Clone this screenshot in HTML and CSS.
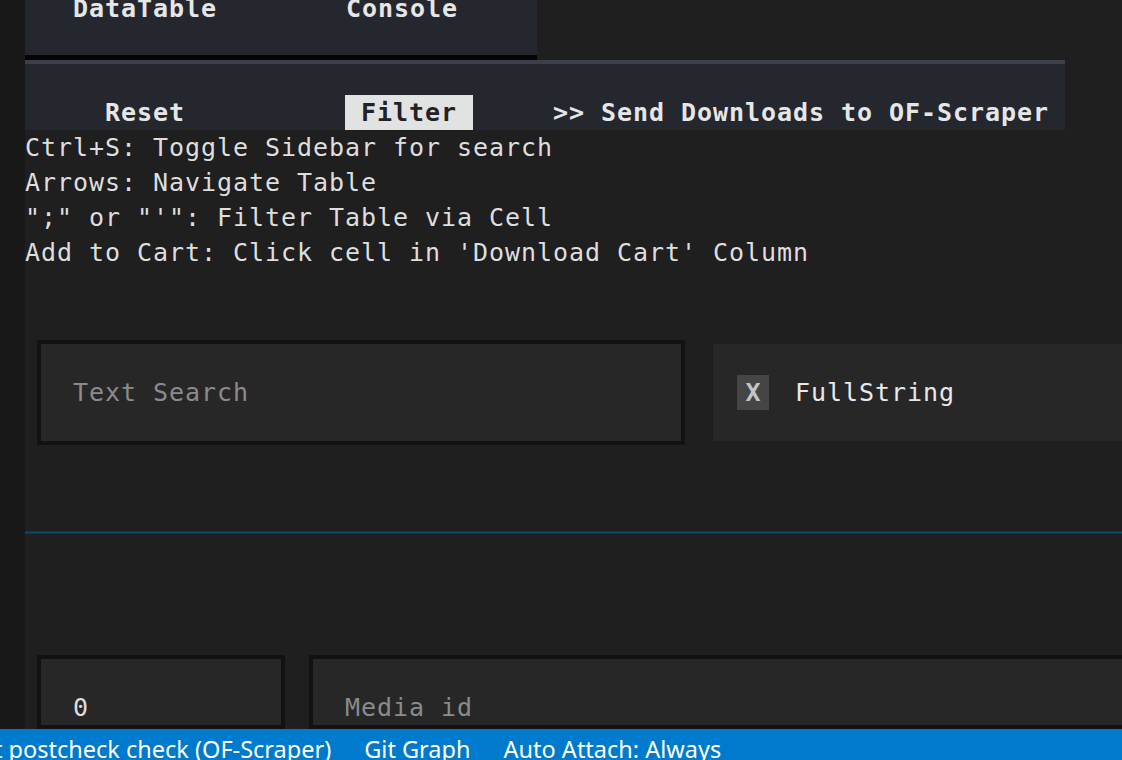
FILE: index.html
```html
<!DOCTYPE html>
<html>
<head>
<meta charset="utf-8">
<link rel="stylesheet" href="styles.css">
</head>
<body>
<div class="app">
  <div class="strip"></div>
  <div class="main">
    <div class="tabs">
      <span class="tab tab-first">DataTable</span>
      <span class="tab tab-second">Console</span>
    </div>
    <div class="underline"></div>
    <div class="toolbar">
      <span class="btn btn-reset">Reset</span>
      <span class="btn btn-filter">Filter</span>
      <span class="btn btn-send">&gt;&gt; Send Downloads to OF-Scraper</span>
    </div>
    <div class="help">
      <div class="help-line">Ctrl+S: Toggle Sidebar for search</div>
      <div class="help-line">Arrows: Navigate Table</div>
      <div class="help-line">";" or "'": Filter Table via Cell</div>
      <div class="help-line">Add to Cart: Click cell in 'Download Cart' Column</div>
    </div>
    <div class="search-row">
      <div class="input input-search"><span class="placeholder">Text Search</span></div>
      <div class="filter-panel">
        <span class="xbox">X</span>
        <span class="fullstring">FullString</span>
      </div>
    </div>
    <div class="rule"></div>
    <div class="bottom-row">
      <div class="input input-num"><span class="value">0</span></div>
      <div class="input input-media"><span class="placeholder">Media id</span></div>
    </div>
  </div>
</div>
<div class="statusbar">
  <span class="status-item status-first">t postcheck check (OF-Scraper)</span>
  <span class="status-item">Git Graph</span>
  <span class="status-item">Auto Attach: Always</span>
</div>
</body>
</html>
```
FILE: styles.css
```css
html, body {
  margin: 0;
  padding: 0;
}
body {
  width: 1122px;
  height: 760px;
  overflow: hidden;
  background: #1f1f1f;
  font-family: "DejaVu Sans Mono", monospace;
  font-size: 25px;
  letter-spacing: 0.95px;
  color: #e0e0e0;
}
.app {
  display: flex;
  height: 729px;
  overflow: hidden;
}
.strip {
  width: 25px;
  flex: none;
  background: #181818;
}
.main {
  flex: 1;
  display: flex;
  flex-direction: column;
  min-width: 0;
}
.main > * {
  flex: none;
}
.tabs {
  width: 512px;
  height: 55px;
  background: #24272e;
  display: flex;
  align-items: flex-start;
  overflow: hidden;
}
.tab {
  font-weight: bold;
  line-height: 17px;
  color: #e6e6e6;
  white-space: pre;
}
.tab-first { margin-left: 48px; }
.tab-second { margin-left: 129px; }
.underline {
  width: 512px;
  height: 5px;
  background: #050505;
}
.toolbar {
  width: 1040px;
  height: 66px;
  border-top: 4px solid #3c4149;
  background: #24272e;
  display: flex;
  align-items: flex-end;
}
.btn {
  font-weight: bold;
  line-height: 35px;
  padding: 0 16px;
  color: #e6e6e6;
  white-space: pre;
}
.btn-reset { margin-left: 64px; }
.btn-filter {
  margin-left: 144px;
  background: #e1e3e2;
  color: #1f2329;
}
.btn-send { margin-left: 64px; }
.help {
  color: #dedede;
}
.help-line {
  line-height: 35px;
  height: 35px;
  white-space: pre;
}
.search-row {
  margin-top: 70px;
  height: 105px;
  display: flex;
  align-items: stretch;
}
.input {
  box-sizing: border-box;
  border: 4px solid #121212;
  background: #272727;
  padding: 31px 0 0 32px;
  line-height: 35px;
  white-space: pre;
}
.input-search {
  margin-left: 12px;
  width: 648px;
  flex: none;
}
.placeholder { color: #8b8b8b; }
.value { color: #dddddd; }
.filter-panel {
  flex: 1;
  margin-left: 24px;
  border: 4px solid #1f1f1f;
  border-right: none;
  background: #272727;
  display: flex;
  align-items: center;
}
.xbox {
  margin-left: 24px;
  width: 32px;
  height: 35px;
  line-height: 35px;
  background: #454545;
  color: #c4c4c4;
  font-weight: bold;
  text-align: center;
  letter-spacing: 0;
}
.fullstring {
  margin-left: 26px;
  line-height: 35px;
  color: #e8e8e8;
}
.rule {
  margin-top: 86px;
  height: 3px;
  background: #0f4a75;
  border-top: 1px solid #0d3452;
  border-bottom: 1px solid #0d3452;
  box-sizing: border-box;
}
.bottom-row {
  margin-top: 121px;
  height: 74px;
  display: flex;
}
.input-num {
  margin-left: 12px;
  width: 248px;
  flex: none;
}
.input-media {
  margin-left: 24px;
  flex: 1;
  border-right: none;
}
.statusbar {
  height: 31px;
  background: #007acc;
  display: flex;
  align-items: flex-start;
  font-family: "Noto Sans", sans-serif;
  font-size: 23.5px;
  letter-spacing: 0;
  color: #ffffff;
  white-space: pre;
  overflow: hidden;
}
.status-item {
  line-height: 40px;
  margin-right: 33px;
}
.status-first {
  margin-left: -6px;
}
```
